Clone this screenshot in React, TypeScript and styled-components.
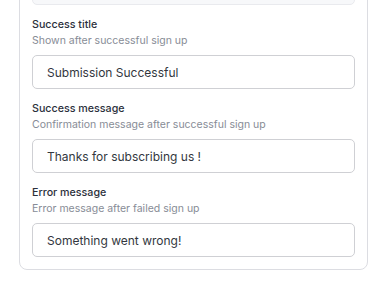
import styled, { createGlobalStyle } from 'styled-components'

const GlobalStyle = createGlobalStyle`
	html, body {
		margin: 0;
		padding: 0;
		background: #ffffff;
		font-family: Inter, "Noto Sans", sans-serif;
		overflow: hidden;
	}
`

type Field = {
	label: string
	hint: string
	value: string
}

const fields: Field[] = [
	{ label: 'Success title', hint: 'Shown after successful sign up', value: 'Submission Successful' },
	{ label: 'Success message', hint: 'Confirmation message after successful sign up', value: 'Thanks for subscribing us !' },
	{ label: 'Error message', hint: 'Error message after failed sign up', value: 'Something went wrong!' },
]

export default function App(): JSX.Element {
	return (
		<Page>
			<GlobalStyle />
			<Card>
				{/* bottom of the previous (disabled) field, scrolled out of view */}
				<MutedBox />
				{fields.map((f) => (
					<Group key={f.label}>
						<Label>{f.label}</Label>
						<Hint>{f.hint}</Hint>
						<Input defaultValue={f.value} />
					</Group>
				))}
			</Card>
		</Page>
	)
}

const Page = styled.main`
	padding: 0 7px 0 19px;
	margin-top: -42px;
`
const Card = styled.section`
	display: flex;
	flex-direction: column;
	gap: 12px;
	border: 1px solid #dcdde2;
	border-radius: 8px;
	padding: 12px;
	background: #fff;
`
const MutedBox = styled.div`
	height: 34px;
	box-sizing: border-box;
	background: #f7f8fa;
	border: 1px solid #e9eaee;
	border-radius: 5px;
`
const Group = styled.div`
	display: flex;
	flex-direction: column;
`
const Label = styled.label`
	font-size: 10.7px;
	line-height: 16px;
	font-weight: 500;
	color: #2b303b;
`
const Hint = styled.span`
	font-size: 10.5px;
	line-height: 16px;
	color: #878c96;
	margin-bottom: 6px;
`
const Input = styled.input`
	box-sizing: border-box;
	height: 34px;
	width: 100%;
	padding: 0 14px;
	font-family: Inter, "Noto Sans", sans-serif;
	font-size: 12px;
	color: #333740;
	background: #fff;
	border: 1px solid #cfd0d4;
	border-radius: 5px;
	outline: none;
`
